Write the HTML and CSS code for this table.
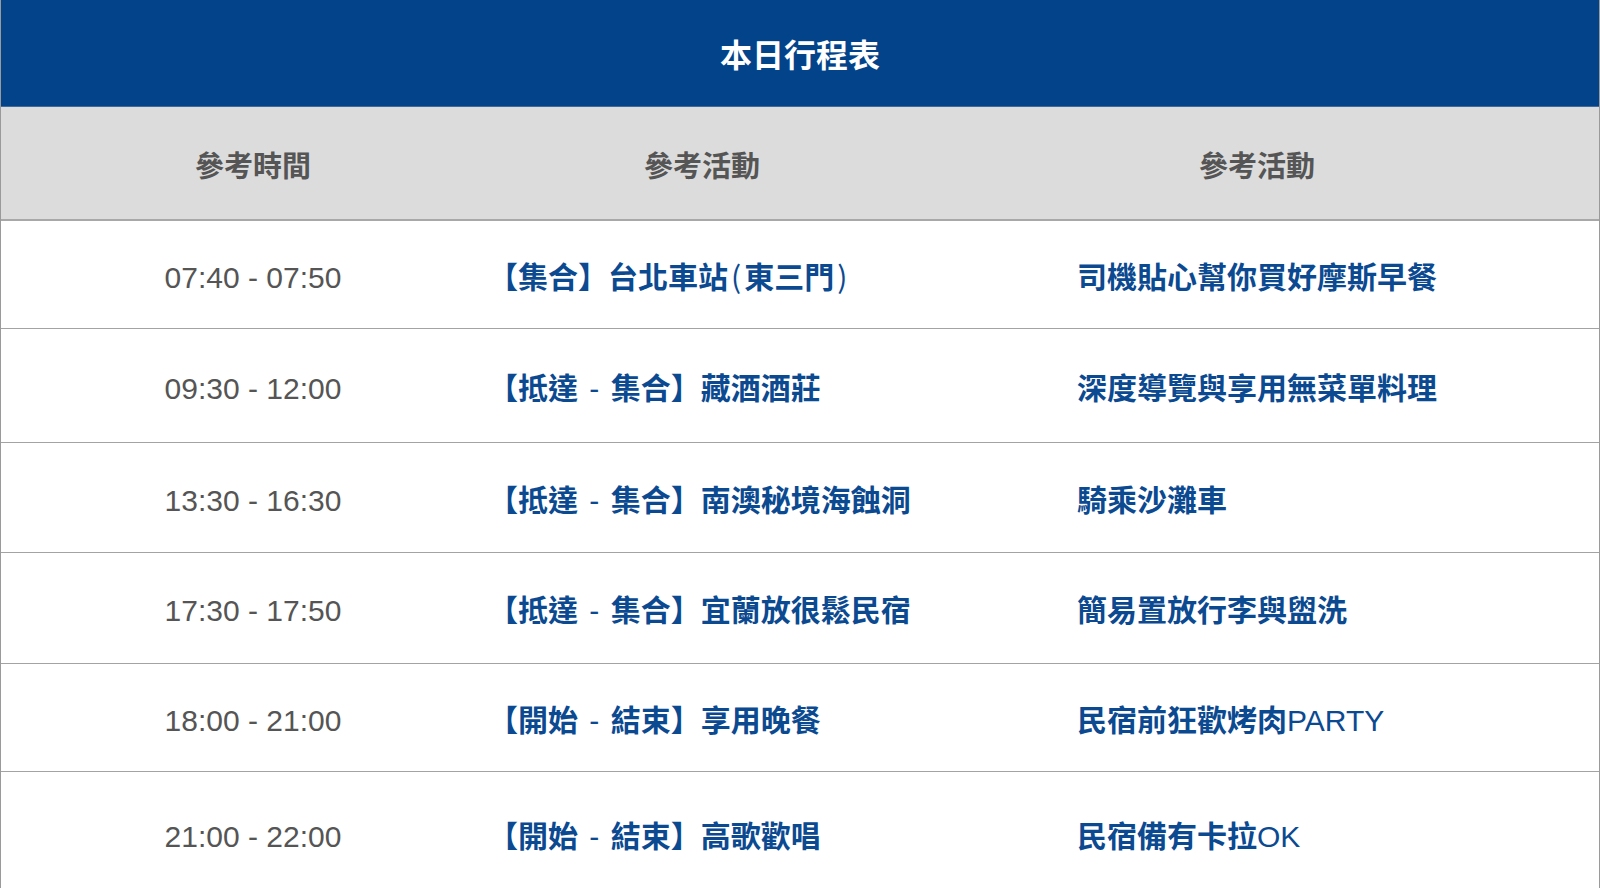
FILE: index.html
```html
<!DOCTYPE html>
<html lang="zh-Hant">
<head>
<meta charset="utf-8">
<title>本日行程表</title>
<link rel="stylesheet" href="styles.css">
</head>
<body>
<div class="page">
  <div class="title">本日行程表</div>
  <div class="table">
    <div class="cell head c1"><span>參考時間</span></div>
    <div class="cell head c2"><span>參考活動</span></div>
    <div class="cell head c3"><span>參考活動</span></div>

    <div class="cell time c1"><span>07:40 - 07:50</span></div>
    <div class="cell act c2"><span>【集合】台北車站<span class="paren">(</span>東三門<span class="paren">)</span></span></div>
    <div class="cell act c3"><span>司機貼心幫你買好摩斯早餐</span></div>

    <div class="cell time c1"><span>09:30 - 12:00</span></div>
    <div class="cell act c2"><span>【抵達<span class="lat dash"> - </span>集合】藏酒酒莊</span></div>
    <div class="cell act c3"><span>深度導覽與享用無菜單料理</span></div>

    <div class="cell time c1"><span>13:30 - 16:30</span></div>
    <div class="cell act c2"><span>【抵達<span class="lat dash"> - </span>集合】南澳秘境海蝕洞</span></div>
    <div class="cell act c3"><span>騎乘沙灘車</span></div>

    <div class="cell time c1"><span>17:30 - 17:50</span></div>
    <div class="cell act c2"><span>【抵達<span class="lat dash"> - </span>集合】宜蘭放很鬆民宿</span></div>
    <div class="cell act c3"><span>簡易置放行李與盥洗</span></div>

    <div class="cell time c1"><span>18:00 - 21:00</span></div>
    <div class="cell act c2"><span>【開始<span class="lat dash"> - </span>結束】享用晚餐</span></div>
    <div class="cell act c3"><span>民宿前狂歡烤肉<span class="lat">PARTY</span></span></div>

    <div class="cell time c1 last"><span>21:00 - 22:00</span></div>
    <div class="cell act c2 last"><span>【開始<span class="lat dash"> - </span>結束】高歌歡唱</span></div>
    <div class="cell act c3 last"><span>民宿備有卡拉<span class="lat">OK</span></span></div>
  </div>
</div>
</body>
</html>
```
FILE: styles.css
```css
html, body {
  margin: 0;
  padding: 0;
  background: #ffffff;
}

.page {
  width: 1600px;
  height: 888px;
  overflow: hidden;
  box-sizing: border-box;
  border-left: 1px solid #9a9a9a;
  border-right: 1px solid #9a9a9a;
  font-family: "Liberation Sans", "Noto Sans CJK TC", sans-serif;
}

.title {
  height: 107px;
  box-sizing: border-box;
  background: #03438a;
  border-bottom: 1px solid #3f6a9c;
  color: #ffffff;
  font-family: "Noto Sans CJK TC", sans-serif;
  font-weight: 700;
  font-size: 32px;
  display: flex;
  align-items: center;
  justify-content: center;
}

.table {
  display: grid;
  grid-template-columns: 482px 432px 1fr;
  grid-template-rows: 114px 108px 114px 110px 111px 108px 124px;
}

.cell {
  display: flex;
  align-items: center;
  box-sizing: border-box;
  border-bottom: 1px solid #a3a3a3;
  font-size: 30px;
  white-space: nowrap;
}

.cell.last {
  border-bottom: none;
}

.head {
  background: #dcdcdc;
  color: #555555;
  font-family: "Noto Sans CJK TC", sans-serif;
  font-weight: 700;
  font-size: 29px;
  justify-content: center;
  border-bottom: 2px solid #a8a8a8;
  padding-top: 2px;
}

.head.c1 {
  padding-left: 22px;
}

.head.c2 {
  padding-left: 6px;
}

.time {
  justify-content: center;
  padding-left: 22px;
  padding-top: 6px;
  color: #555555;
  font-family: "Liberation Sans", sans-serif;
  font-size: 30px;
}

.act {
  color: #0b4a91;
  font-family: "Noto Sans CJK TC", sans-serif;
  font-weight: 700;
}

.act.c2 {
  padding-left: 5px;
}

.act.c3 {
  padding-left: 162px;
}

.lat {
  font-family: "Liberation Sans", sans-serif;
  font-weight: 400;
}

.dash {
  margin: 0 3px;
}

.paren {
  font-weight: 400;
  margin: 0 3px;
}
```
